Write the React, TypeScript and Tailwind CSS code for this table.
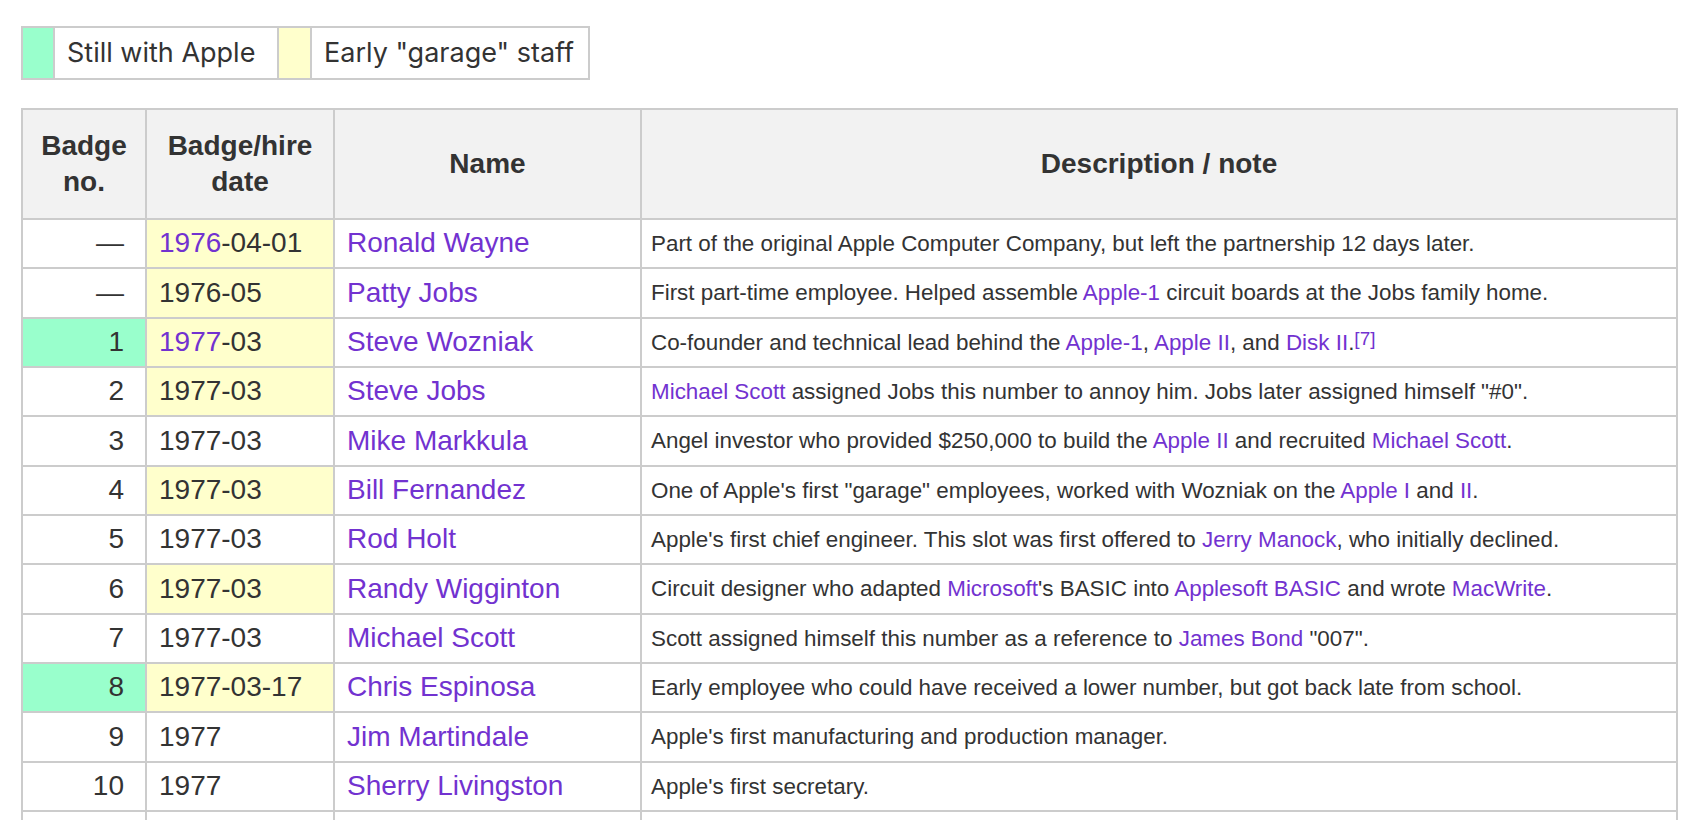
import React from "react";

type Part = string | { l: string } | { sup: string };

const L = (l: string) => ({ l });

type Row = {
  no: string;
  green?: boolean;
  date: Part[];
  yellow?: boolean;
  name: string;
  desc: Part[];
};

const rows: Row[] = [
  { no: "—", date: [L("1976"), "-04-01"], yellow: true, name: "Ronald Wayne", desc: ["Part of the original Apple Computer Company, but left the partnership 12 days later."] },
  { no: "—", date: ["1976-05"], yellow: true, name: "Patty Jobs", desc: ["First part-time employee. Helped assemble ", L("Apple-1"), " circuit boards at the Jobs family home."] },
  { no: "1", green: true, date: [L("1977"), "-03"], yellow: true, name: "Steve Wozniak", desc: ["Co-founder and technical lead behind the ", L("Apple-1"), ", ", L("Apple II"), ", and ", L("Disk II"), ".", { sup: "[7]" }] },
  { no: "2", date: ["1977-03"], yellow: true, name: "Steve Jobs", desc: [L("Michael Scott"), " assigned Jobs this number to annoy him. Jobs later assigned himself \"#0\"."] },
  { no: "3", date: ["1977-03"], name: "Mike Markkula", desc: ["Angel investor who provided $250,000 to build the ", L("Apple II"), " and recruited ", L("Michael Scott"), "."] },
  { no: "4", date: ["1977-03"], yellow: true, name: "Bill Fernandez", desc: ["One of Apple's first \"garage\" employees, worked with Wozniak on the ", L("Apple I"), " and ", L("II"), "."] },
  { no: "5", date: ["1977-03"], name: "Rod Holt", desc: ["Apple's first chief engineer. This slot was first offered to ", L("Jerry Manock"), ", who initially declined."] },
  { no: "6", date: ["1977-03"], yellow: true, name: "Randy Wigginton", desc: ["Circuit designer who adapted ", L("Microsoft"), "'s BASIC into ", L("Applesoft BASIC"), " and wrote ", L("MacWrite"), "."] },
  { no: "7", date: ["1977-03"], name: "Michael Scott", desc: ["Scott assigned himself this number as a reference to ", L("James Bond"), " \"007\"."] },
  { no: "8", green: true, date: ["1977-03-17"], yellow: true, name: "Chris Espinosa", desc: ["Early employee who could have received a lower number, but got back late from school."] },
  { no: "9", date: ["1977"], name: "Jim Martindale", desc: ["Apple's first manufacturing and production manager."] },
  { no: "10", date: ["1977"], name: "Sherry Livingston", desc: ["Apple's first secretary."] },
];

function renderParts(parts: Part[]) {
  return parts.map((p, i) => {
    if (typeof p === "string") return <React.Fragment key={i}>{p}</React.Fragment>;
    if ("l" in p)
      return (
        <a key={i} href="#" className="text-[#7232d0] no-underline">
          {p.l}
        </a>
      );
    return (
      <sup key={i} className="text-[#7232d0] text-[19px] leading-none relative -top-[5px]">
        {p.sup}
      </sup>
    );
  });
}

export default function App() {
  return (
    <div className="min-h-screen bg-white text-[#333] px-[21px] pt-[26px]" style={{ fontFamily: '"Liberation Sans", Arial, sans-serif' }}>
      <table
        className="border-collapse border-2 border-[#cccccc] text-[27px] text-[#333]"
        style={{ fontFamily: 'Inter, "Noto Sans", sans-serif' }}
      >
        <tbody>
          <tr className="h-[52px]">
            <td className="w-[32px] bg-[#99ffcc] border-2 border-[#cccccc]"></td>
            <td className="w-[224px] pl-[12px] border-2 border-[#cccccc] bg-white">Still with Apple</td>
            <td className="w-[33px] bg-[#ffffcc] border-2 border-[#cccccc]"></td>
            <td className="w-[278px] pl-[12px] border-2 border-[#cccccc] bg-white">Early "garage" staff</td>
          </tr>
        </tbody>
      </table>

      <table className="mt-[28px] border-collapse border-2 border-[#cccccc] table-fixed w-[1655px] leading-[1.3]">
        <colgroup>
          <col className="w-[124px]" />
          <col className="w-[188px]" />
          <col className="w-[307px]" />
          <col className="w-[1036px]" />
        </colgroup>
        <thead>
          <tr className="h-[110px] bg-[#f2f2f2] text-[28px] font-bold">
            <th className="border-2 border-[#cccccc] px-[11px] text-center align-middle">Badge<br />no.</th>
            <th className="border-2 border-[#cccccc] px-[11px] text-center align-middle">Badge/hire<br />date</th>
            <th className="border-2 border-[#cccccc] px-[11px] text-center align-middle">Name</th>
            <th className="border-2 border-[#cccccc] px-[11px] text-center align-middle">Description / note</th>
          </tr>
        </thead>
        <tbody>
          {rows.map((r, i) => (
            <tr key={i} className="h-[49.33px]">
              <td className={`border-2 border-[#cccccc] text-right pr-[21px] text-[28px] whitespace-nowrap ${r.green ? "bg-[#99ffcc]" : "bg-white"}`}>{r.no}</td>
              <td className={`border-2 border-[#cccccc] pl-[12px] text-[28px] whitespace-nowrap ${r.yellow ? "bg-[#ffffcc]" : "bg-white"}`}>{renderParts(r.date)}</td>
              <td className="border-2 border-[#cccccc] pl-[12px] text-[28px] whitespace-nowrap bg-white">
                <a href="#" className="text-[#7232d0] no-underline">{r.name}</a>
              </td>
              <td className="border-2 border-[#cccccc] pl-[9px] text-[22.4px] whitespace-nowrap bg-white">{renderParts(r.desc)}</td>
            </tr>
          ))}
          <tr className="h-[49.33px]">
            <td className="border-2 border-[#cccccc] bg-white"></td>
            <td className="border-2 border-[#cccccc] bg-white"></td>
            <td className="border-2 border-[#cccccc] bg-white"></td>
            <td className="border-2 border-[#cccccc] bg-white"></td>
          </tr>
        </tbody>
      </table>
    </div>
  );
}
